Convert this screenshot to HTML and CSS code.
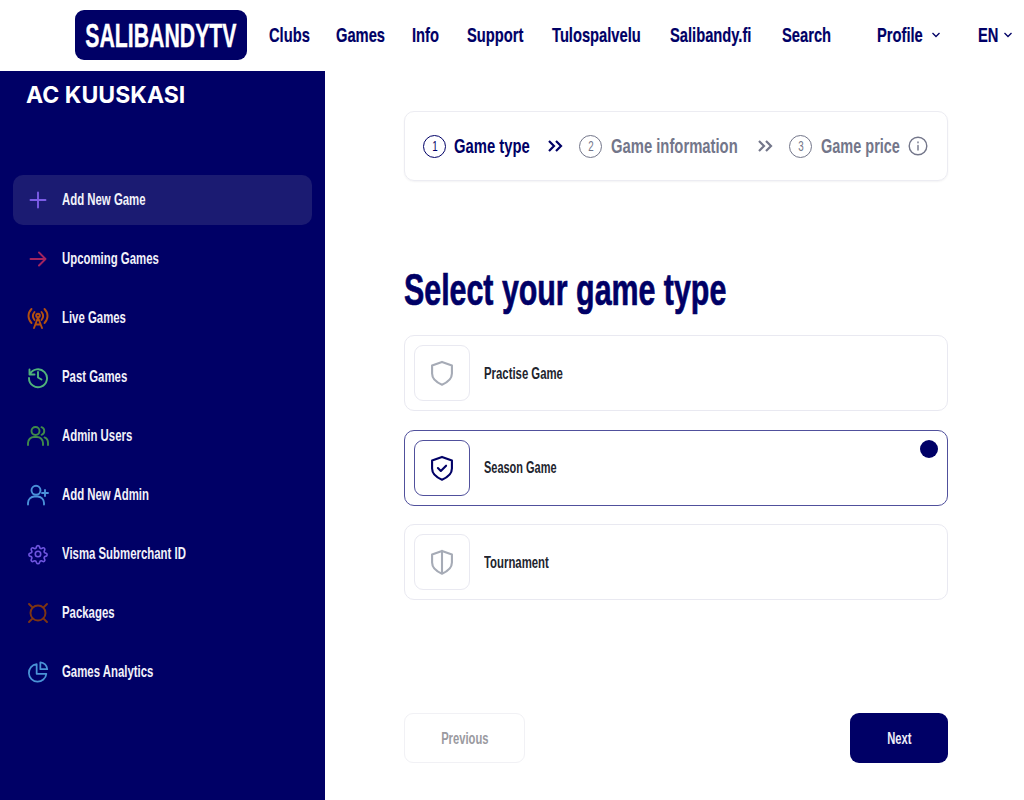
FILE: index.html
```html
<!DOCTYPE html>
<html lang="en">
<head>
<meta charset="utf-8">
<title>Salibandy TV</title>
<link rel="stylesheet" href="styles.css">
</head>
<body>
<header class="topbar">
  <a class="logo"><span class="cond">SALIBANDYTV</span></a>
  <nav class="topnav">
    <a class="nav-clubs"><span class="cond">Clubs</span></a>
    <a class="nav-games"><span class="cond">Games</span></a>
    <a class="nav-info"><span class="cond">Info</span></a>
    <a class="nav-support"><span class="cond">Support</span></a>
    <a class="nav-tulos"><span class="cond">Tulospalvelu</span></a>
    <a class="nav-sali"><span class="cond">Salibandy.fi</span></a>
    <a class="nav-search"><span class="cond">Search</span></a>
    <a class="nav-profile"><span class="cond">Profile</span><svg class="caret" viewBox="0 0 10 6"><path d="M1.5 1 5 4.5 8.5 1"/></svg></a>
    <a class="nav-lang"><span class="cond">EN</span><svg class="caret" viewBox="0 0 10 6"><path d="M1.5 1 5 4.5 8.5 1"/></svg></a>
  </nav>
</header>
<div class="shell">
  <aside class="sidebar">
    <h2 class="club">AC KUUSKASI</h2>
    <ul class="menu">
      <li class="item active"><svg class="ico c-purple" viewBox="0 0 24 24"><path d="M12 4.500v15M4.500 12h15"/></svg><span class="cond">Add New Game</span></li>
      <li class="item"><svg class="ico c-pink" viewBox="0 0 24 24"><path d="M4.500 12h15M13 5.500l6.500 6.500-6.500 6.500"/></svg><span class="cond">Upcoming Games</span></li>
      <li class="item"><svg class="ico c-orange" viewBox="0 0 24 24"><path d="M5.500 3c-4 4-4 10 0 14M18.500 3c4 4 4 10 0 14M8.500 6c-2 2.400-2 5.600 0 8M15.500 6c2 2.400 2 5.600 0 8"/><circle cx="12" cy="9.500" r="1.800"/><path d="M12 11.500 8 22M12 11.500 16 22M9.500 18.500h5"/></svg><span class="cond">Live Games</span></li>
      <li class="item"><svg class="ico c-green" viewBox="0 0 24 24"><path d="M3.500 4.500v5h5M3.800 9.500A9 9 0 1 1 3 13"/><path d="M12 7v5.500l3.500 2"/></svg><span class="cond">Past Games</span></li>
      <li class="item"><svg class="ico c-dgreen" viewBox="0 0 24 24"><circle cx="9.500" cy="7" r="4"/><path d="M2 21v-2a6 6 0 0 1 6-6h3a6 6 0 0 1 6 6v2M15.500 3.200a4 4 0 0 1 0 7.600M18.500 13.400a6 6 0 0 1 3.500 5.600v2"/></svg><span class="cond">Admin Users</span></li>
      <li class="item"><svg class="ico c-blue" viewBox="0 0 24 24"><circle cx="10" cy="7.300" r="4.500"/><path d="M2 21.500V20a6.500 6.500 0 0 1 6.500-6.500h3a6.500 6.500 0 0 1 6.500 6.500v1.500M19 7v6M16 10h6"/></svg><span class="cond">Add New Admin</span></li>
      <li class="item"><svg class="ico c-violet" viewBox="0 0 24 24"><g transform="translate(1.800 1.800) scale(.85)"><path d="M10.300 3.300a1.800 1.800 0 0 1 3.400 0l.3 1a1.800 1.800 0 0 0 2.600 1.100l.9-.5a1.800 1.800 0 0 1 2.400 2.400l-.5.900a1.800 1.800 0 0 0 1.100 2.600l1 .3a1.800 1.800 0 0 1 0 3.400l-1 .3a1.800 1.800 0 0 0-1.100 2.600l.5.900a1.800 1.800 0 0 1-2.400 2.400l-.9-.5a1.800 1.800 0 0 0-2.600 1.100l-.3 1a1.800 1.800 0 0 1-3.400 0l-.3-1a1.800 1.800 0 0 0-2.600-1.100l-.9.500a1.800 1.800 0 0 1-2.400-2.400l.5-.9a1.800 1.800 0 0 0-1.100-2.600l-1-.3a1.800 1.800 0 0 1 0-3.400l1-.3a1.800 1.800 0 0 0 1.100-2.600l-.5-.9a1.800 1.800 0 0 1 2.400-2.400l.9.500a1.800 1.800 0 0 0 2.600-1.100z"/><circle cx="12" cy="12" r="3.200"/></g></svg><span class="cond">Visma Submerchant ID</span></li>
      <li class="item"><svg class="ico c-brown" viewBox="0 0 24 24"><circle cx="12" cy="12" r="7.500"/><path d="M3 3l3.700 3.700M21 3l-3.700 3.700M3 21l3.700-3.700M21 21l-3.700-3.700"/></svg><span class="cond">Packages</span></li>
      <li class="item"><svg class="ico c-sky" viewBox="0 0 24 24"><g transform="translate(1 .5) scale(.92)"><path d="M10.500 4a9.500 9.500 0 1 0 10.500 10.500h-10.500z"/><path d="M14.500 2a8 8 0 0 1 7.500 7.500h-7.500z"/></g></svg><span class="cond">Games Analytics</span></li>
    </ul>
  </aside>
  <main class="content">
    <div class="steps">
      <span class="num current"><span class="cond">1</span></span><span class="step s1 current"><span class="cond">Game type</span></span>
      <svg class="sep current" viewBox="0 0 16 14"><path d="M2 2l5 5-5 5M9 2l5 5-5 5"/></svg>
      <span class="num"><span class="cond">2</span></span><span class="step s2"><span class="cond">Game information</span></span>
      <svg class="sep" viewBox="0 0 16 14"><path d="M2 2l5 5-5 5M9 2l5 5-5 5"/></svg>
      <span class="num"><span class="cond">3</span></span><span class="step s3"><span class="cond">Game price</span></span>
      <svg class="info" viewBox="0 0 20 20"><circle cx="10" cy="10" r="8.800"/><path d="M10 9.500v4.500M10 6v.8"/></svg>
    </div>
    <h1 class="title"><span class="cond">Select your game type</span></h1>
    <div class="options">
      <div class="option">
        <span class="tile"><svg class="shield" viewBox="0 0 24 24"><path d="M12 2.500 20.500 5.500v7c0 4.500-3.500 7.500-8.500 9.500-5-2-8.500-5-8.500-9.500v-7z"/></svg></span>
        <span class="label"><span class="cond">Practise Game</span></span>
      </div>
      <div class="option selected">
        <span class="tile"><svg class="shield" viewBox="0 0 24 24"><path d="M12 2.500 20.500 5.500v7c0 4.500-3.500 7.500-8.500 9.500-5-2-8.500-5-8.500-9.500v-7z"/><path d="M8.500 12l2.500 2.500 4.500-4.500"/></svg></span>
        <span class="label"><span class="cond">Season Game</span></span>
        <span class="dot"></span>
      </div>
      <div class="option">
        <span class="tile"><svg class="shield" viewBox="0 0 24 24"><path d="M12 2.500 20.500 5.500v7c0 4.500-3.500 7.500-8.500 9.500-5-2-8.500-5-8.500-9.500v-7zM12 2.500V22"/></svg></span>
        <span class="label"><span class="cond">Tournament</span></span>
      </div>
    </div>
    <div class="actions">
      <button class="btn prev"><span class="cond">Previous</span></button>
      <button class="btn next"><span class="cond">Next</span></button>
    </div>
  </main>
</div>
</body>
</html>
```

FILE: styles.css
```css
* { box-sizing: border-box; }
html, body { margin: 0; padding: 0; height: 100%; overflow: hidden; }
body { background: #fff; color: #000066; font-family: "Liberation Sans", Arial, sans-serif; }

/* The design's condensed face is not installed: narrow Liberation Sans Bold instead. */
.cond { display: inline-block; white-space: nowrap; transform: scaleX(.7); transform-origin: 0 50%; }

.topbar { height: 71px; display: flex; align-items: flex-start; padding: 10px 0 0 75px; }
.logo { width: 172px; height: 50px; background: #000066; color: #fff; border-radius: 9px; font-size: 34px; font-weight: 700; line-height: 50px; display: flex; justify-content: center; flex: none; }
.logo .cond { flex: none; transform: scaleX(.625); transform-origin: 50% 50%; -webkit-text-stroke: .4px #fff; }
.topnav { display: flex; align-items: center; height: 50px; font-size: 21px; font-weight: 700; white-space: nowrap; -webkit-text-stroke: .2px #000066; }
.topnav a { display: flex; align-items: center; flex: none; }
.nav-clubs { margin-left: 22px; width: 67px; }
.nav-games { width: 76px; }
.nav-info { width: 55px; }
.nav-support { width: 85px; }
.nav-tulos { width: 118px; }
.nav-sali { width: 112px; }
.nav-search { width: 95px; }
.nav-profile { width: 101px; }
.nav-profile .cond { width: 54px; }
.nav-lang .cond { width: 25px; }
.caret { width: 10px; height: 6px; fill: none; stroke: #000066; stroke-width: 1.300; flex: none; }

.shell { display: flex; height: 729px; }
.sidebar { width: 325px; background: #000066; padding: 10px 13px 0; flex: none; }
.club { margin: 0 0 0 13px; color: #fff; font-family: "Inter", sans-serif; font-size: 23px; font-weight: 700; line-height: 28px; letter-spacing: .05px; }
.menu { list-style: none; margin: 66px 0 0; padding: 0; display: flex; flex-direction: column; gap: 9px; }
.item { height: 50px; border-radius: 10px; display: flex; align-items: center; gap: 12px; padding-left: 13px; color: #f2f2fa; font-size: 17px; font-weight: 700; }
.item .cond { transform: scaleX(.67); }
.item.active { background: #1b1b72; }
.ico { width: 24px; height: 24px; flex: none; fill: none; stroke-width: 1.900; stroke-linecap: round; stroke-linejoin: round; }
.c-purple { stroke: #7c5ce6; }
.c-pink { stroke: #a3245f; }
.c-orange { stroke: #b4500f; }
.c-green { stroke: #4fb27a; }
.c-dgreen { stroke: #3f8a4a; }
.c-blue { stroke: #4a90d9; }
.c-violet { stroke: #6f55e0; }
.c-brown { stroke: #7f3512; }
.c-sky { stroke: #4a93d6; }

.content { flex: none; width: 699px; padding: 40px 76px 0 79px; }
.steps { height: 70px; border: 1px solid #ececf2; border-radius: 10px; box-shadow: 0 1px 2px rgba(0,0,30,.05); display: flex; align-items: center; padding-left: 18px; font-size: 21px; font-weight: 700; color: #73768a; white-space: nowrap; }
.num { width: 23px; height: 23px; border: 1px solid #73768a; border-radius: 50%; font-size: 14px; font-weight: 400; display: flex; align-items: center; justify-content: center; margin-right: 9px; flex: none; }
.num .cond { transform-origin: 50% 50%; }
.num.current { border-color: #000066; color: #000066; margin-right: 8px; }
.step { flex: none; }
.step.current { color: #000066; }
.s1 { width: 75px; }
.s2 { width: 128px; }
.s3 { width: 79px; }
.step .cond { transform: scaleX(.705); }
.s3 .cond { transform: scaleX(.69); }
.sep { width: 16px; height: 14px; margin: 0 16px 0 18px; fill: none; stroke: #73768a; stroke-width: 2.200; flex: none; }
.sep.current { stroke: #000066; }
.info { width: 20px; height: 20px; margin-left: 8px; fill: none; stroke: #73768a; stroke-width: 1.400; stroke-linecap: round; flex: none; }

.title { margin: 84px 0 0; font-size: 44px; font-weight: 700; line-height: 50px; color: #000066; -webkit-text-stroke: .7px #000066; }
.title .cond { transform: scaleX(.69); }
.options { margin-top: 20px; display: flex; flex-direction: column; gap: 18.5px; }
.option { position: relative; height: 76px; border: 1px solid #e9e9f1; border-radius: 10px; display: flex; align-items: center; padding-left: 9px; gap: 14px; }
.tile { width: 56px; height: 56px; border: 1px solid #e9e9f1; border-radius: 9px; display: flex; align-items: center; justify-content: center; flex: none; }
.shield { width: 28px; height: 28px; fill: none; stroke: #a6abb6; stroke-width: 1.800; stroke-linecap: round; stroke-linejoin: round; }
.label { padding-top: 2px; font-size: 16px; font-weight: 700; color: #22242e; }
.label .cond { transform: scaleX(.71); }
.selected .label { padding-top: 0; }
.selected .label .cond { transform: scaleX(.685); }
.option.selected { border-color: #50509c; }
.selected .tile { border-color: #50509c; }
.selected .shield { stroke: #000066; }
.dot { position: absolute; top: 9px; right: 9px; width: 18px; height: 18px; border-radius: 50%; background: #000066; }

.actions { margin-top: 113px; display: flex; justify-content: space-between; }
.btn { height: 50px; padding-top: 2px; border-radius: 9px; font-family: inherit; font-size: 16px; font-weight: 700; }
.btn .cond { transform-origin: 50% 50%; }
.prev { width: 121px; background: #fff; border: 1px solid #f1f1f5; color: #9a9aa0; }
.next { width: 98px; background: #000066; border: 0; color: #eeeef8; }
```
